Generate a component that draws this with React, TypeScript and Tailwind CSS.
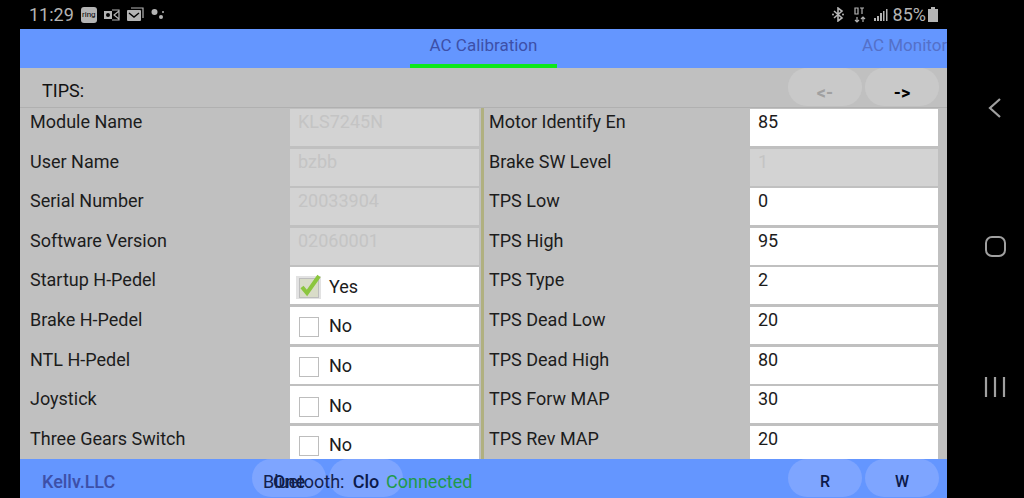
import React from 'react';

const leftRows = [
    { label: 'Module Name', value: 'KLS7245N' },
    { label: 'User Name', value: 'bzbb' },
    { label: 'Serial Number', value: '20033904' },
    { label: 'Software Version', value: '02060001' },
    { label: 'Startup H-Pedel', checked: true },
    { label: 'Brake H-Pedel', checked: false },
    { label: 'NTL H-Pedel', checked: false },
    { label: 'Joystick', checked: false },
    { label: 'Three Gears Switch', checked: false },
];

const rightRows = [
    { label: 'Motor Identify En', value: '85', editable: true },
    { label: 'Brake SW Level', value: '1', editable: false },
    { label: 'TPS Low', value: '0', editable: true },
    { label: 'TPS High', value: '95', editable: true },
    { label: 'TPS Type', value: '2', editable: true },
    { label: 'TPS Dead Low', value: '20', editable: true },
    { label: 'TPS Dead High', value: '80', editable: true },
    { label: 'TPS Forw MAP', value: '30', editable: true },
    { label: 'TPS Rev MAP', value: '20', editable: true },
];

const Check = ({ checked }: { checked: boolean }) => (
    <svg width="26" height="26" viewBox="0 0 26 26" className="shrink-0">
        {checked && <rect x="0" y="3" width="25" height="23" fill="#e2e2e2" />}
        <rect x="3.5" y="5.5" width="19" height="19" fill={checked ? '#d9dcc8' : '#fff'} stroke="#bdbdbd" strokeWidth="1" />
        {checked && <path d="M6 14l5 6L23 3" fill="none" stroke="#8cc63f" strokeWidth="4" />}
    </svg>
);

const StatusBar = () => (
    <div className="h-[29px] flex items-center pl-[29px] pr-[86px] text-[#b4b4b4]">
        <span className="text-[18px] leading-none">11:29</span>
        <span className="ml-[7px] w-[16px] h-[16px] rounded-[3px] bg-[#b4b4b4] text-black text-[8px] leading-[16px] text-center">ring</span>
        <svg width="16" height="14" viewBox="0 0 16 14" className="ml-[7px]">
            <rect x="0" y="3" width="8" height="8" fill="#b4b4b4" />
            <circle cx="4" cy="7" r="2" fill="#000" />
            <path d="M8 2h7v10H8M15 3L10 7l5 4" fill="none" stroke="#b4b4b4" strokeWidth="1.2" />
        </svg>
        <svg width="17" height="16" viewBox="0 0 17 16" className="ml-[7px]">
            <path d="M4 1h12v10" fill="none" stroke="#b4b4b4" strokeWidth="1.2" />
            <rect x="0" y="3" width="14" height="11" rx="1" fill="#b4b4b4" />
            <path d="M2 6l5 4 5-4" fill="none" stroke="#000" strokeWidth="1.4" />
        </svg>
        <svg width="16" height="14" viewBox="0 0 16 14" className="ml-[7px]">
            <circle cx="3.5" cy="4" r="3" fill="#b4b4b4" />
            <circle cx="10" cy="9" r="2" fill="#b4b4b4" />
            <circle cx="12" cy="4" r="1" fill="#b4b4b4" />
        </svg>
        <div className="ml-auto flex items-center">
            <svg width="12" height="15" viewBox="0 0 12 15">
                <path d="M2 4l8 7-4 3V1l4 3-8 7" fill="none" stroke="#b4b4b4" strokeWidth="1.6" />
                <circle cx="1" cy="7.5" r="1" fill="#b4b4b4" />
                <circle cx="11" cy="7.5" r="1" fill="#b4b4b4" />
            </svg>
            <svg width="12" height="16" viewBox="0 0 12 16" className="ml-[10px]">
                <path d="M3 10v5M1 13l2 2 2-2M9 15v-5M7 12l2-2 2 2" fill="none" stroke="#b4b4b4" strokeWidth="1.2" />
                <path d="M1 1h3v6H1zM6 1h4M8 1v6" fill="none" stroke="#b4b4b4" strokeWidth="1.2" />
            </svg>
            <svg width="14" height="14" viewBox="0 0 14 14" className="ml-[8px]">
                <rect x="0" y="10" width="2" height="3" fill="#b4b4b4" />
                <rect x="3" y="8" width="2" height="5" fill="#b4b4b4" />
                <rect x="6" y="5" width="2" height="8" fill="#b4b4b4" />
                <rect x="9" y="3" width="1.5" height="10" fill="#b4b4b4" />
                <rect x="12" y="1" width="1.5" height="12" fill="#b4b4b4" />
            </svg>
            <span className="ml-[5px] text-[18px] leading-none">85%</span>
            <svg width="10" height="15" viewBox="0 0 10 15" className="ml-[2px]">
                <rect x="3" y="0" width="4" height="2" fill="#b4b4b4" />
                <rect x="0" y="2" width="10" height="13" fill="#b4b4b4" />
            </svg>
        </div>
    </div>
);

const PillButton = ({ label, muted }: { label: string; muted?: boolean }) => (
    <div className={`w-[74px] h-[38px] rounded-[19px] bg-[#c9c9c9] flex items-start justify-center pt-[15px] text-[18px] font-bold leading-[20px] overflow-hidden ${muted ? 'text-[#a0a0a0]' : 'text-black'}`}>
        {label}
    </div>
);

const BlueButton = ({ label, small }: { label: string; small?: boolean }) => (
    <div className={`w-[74px] h-[38px] rounded-[19px] bg-[#7ea5ff] flex justify-center pt-[13px] leading-[20px] font-medium text-[#0c1a4a] ${small ? 'text-[16px]' : 'text-[18px]'}`}>
        <span className="h-[16px] overflow-hidden">{label}</span>
    </div>
);

export default function App() {
    return (
        <div className="w-[1024px] h-[498px] bg-black flex overflow-hidden text-[18px] text-[#1c1c1c]" style={{ fontFamily: 'Roboto, sans-serif' }}>
            <div className="w-[1024px] flex flex-col relative">
                <StatusBar />
                <div className="flex flex-1 min-h-0">
                    <div className="w-[20px]" />
                    <div className="w-[927px] bg-[#c0c0c0] flex flex-col overflow-hidden">
                        {/* Tabs */}
                        <div className="h-[39px] shrink-0 bg-[#6496ff] flex text-[#3d50a8] text-[17px] overflow-hidden whitespace-nowrap">
                            <div className="ml-[390px] w-[147px] shrink-0 h-[39px] border-b-[4px] border-[#0ee81c] text-center leading-[33px]">AC Calibration</div>
                            <div className="ml-[305px] shrink-0 leading-[33px] text-[#5470c8]">AC Monitor</div>
                        </div>
                        {/* Tips */}
                        <div className="h-[40px] shrink-0 flex border-b border-[#b0b0b0] overflow-hidden">
                            <div className="ml-[22px] pt-[13px] text-[18px] leading-[20px] h-[29px] overflow-hidden text-[#111]">TIPS:</div>
                            <div className="ml-auto mr-[8px] flex gap-[3px]">
                                <PillButton label="<-" muted />
                                <PillButton label="->" />
                            </div>
                        </div>
                        {/* Grid */}
                        <div className="flex-1 min-h-0 flex overflow-hidden">
                            <div className="w-[461px] shrink-0">
                                {leftRows.map((r) => (
                                    <div key={r.label} className="h-[39.6px] flex py-[1px]">
                                        <div className="w-[270px] pl-[10px] leading-[26px] whitespace-nowrap">{r.label}</div>
                                        {r.value ? (
                                            <div className="w-[189px] h-[37px] bg-[#d3d3d3] pl-[8px] leading-[26px] text-[#c4c4c4]">{r.value}</div>
                                        ) : (
                                            <div className="w-[189px] h-[37px] bg-white flex items-center pl-[6px] gap-[7px]">
                                                <Check checked={!!r.checked} />
                                                <span className="leading-none pt-[2px]">{r.checked ? 'Yes' : 'No'}</span>
                                            </div>
                                        )}
                                    </div>
                                ))}
                            </div>
                            <div className="w-[3px] bg-[#b0b080] shrink-0" />
                            <div className="flex-1">
                                {rightRows.map((r) => (
                                    <div key={r.label} className="h-[39.6px] flex py-[1px]">
                                        <div className="w-[266px] pl-[5px] leading-[26px] whitespace-nowrap">{r.label}</div>
                                        <div className={`w-[188px] h-[37px] pl-[8px] leading-[26px] ${r.editable ? 'bg-white' : 'bg-[#d3d3d3] text-[#c4c4c4]'}`}>{r.value}</div>
                                    </div>
                                ))}
                            </div>
                        </div>
                        {/* Footer */}
                        <div className="h-[39px] shrink-0 bg-[#6496ff] flex items-start relative overflow-hidden whitespace-nowrap">
                            <div className="ml-[22px] pt-[13px] h-[29px] overflow-hidden text-[18px] leading-[20px] font-medium text-[#3d50a8] w-[210px]">Kelly.LLC</div>
                            <div className="flex gap-[3px]">
                                <BlueButton label="One" />
                                <BlueButton label="Clo" />
                            </div>
                            <div className="absolute left-[243px] top-[13px] text-[18px] leading-[20px] h-[16px] overflow-hidden text-[#14224f]">Bluetooth:</div>
                            <div className="absolute left-[366px] top-[13px] text-[18px] leading-[20px] h-[16px] overflow-hidden text-[#1f9a4a]">Connected</div>
                            <div className="ml-auto mr-[8px] flex gap-[3px]">
                                <BlueButton label="R" small />
                                <BlueButton label="W" small />
                            </div>
                        </div>
                    </div>
                    {/* Nav bar */}
                    <div className="flex-1 flex flex-col items-center pl-[19px]">
                        <svg width="16" height="22" viewBox="0 0 16 22" className="mt-[68px]">
                            <path d="M13 2L3 11l10 9" fill="none" stroke="#a0a0a0" strokeWidth="2.2" />
                        </svg>
                        <div className="mt-[117px] w-[21px] h-[21px] rounded-[7px] border-2 border-[#a0a0a0]" />
                        <svg width="22" height="22" viewBox="0 0 22 22" className="mt-[119px]">
                            <path d="M2 1v20M11 1v20M20 1v20" fill="none" stroke="#a0a0a0" strokeWidth="2.2" />
                        </svg>
                    </div>
                </div>
            </div>
        </div>
    );
}
